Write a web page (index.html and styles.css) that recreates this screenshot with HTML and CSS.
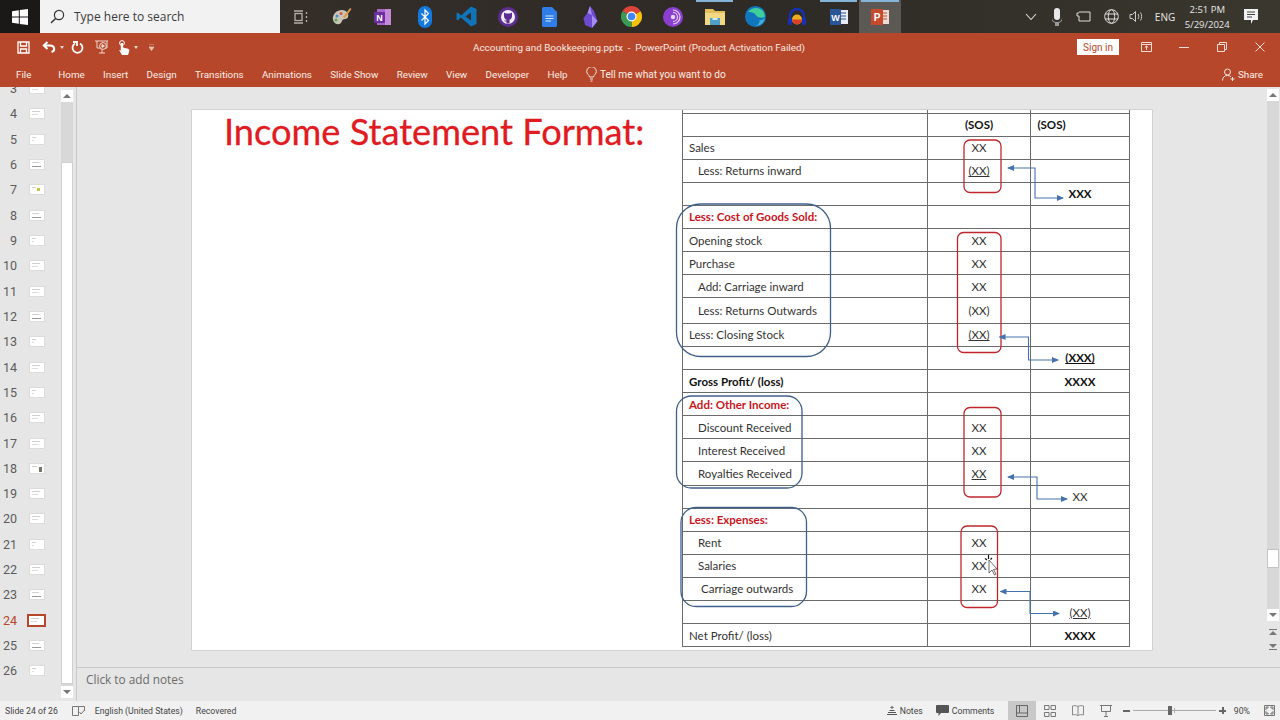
FILE: index.html
```html
<!DOCTYPE html>
<html lang="en">
<head>
    <meta charset="UTF-8">
    <title>Accounting and Bookkeeping.pptx - PowerPoint</title>
    <link rel="stylesheet" href="styles.css">
</head>
<body>
<div class="taskbar">
    <div class="start">
        <svg width="16" height="16" viewBox="0 0 16 16"><path d="M0 2.2L6.8 1.2V7.5H0ZM7.8 1L16 0V7.5H7.8ZM0 8.5H6.8V14.8L0 13.8ZM7.8 8.5H16V16L7.8 15Z" fill="#fff"/></svg>
    </div>
    <div class="search">
        <svg width="15" height="15" viewBox="0 0 15 15" fill="none"><circle cx="9" cy="6" r="4.6" stroke="#333" stroke-width="1.2"/><path d="M5.6 9.4L1 14" stroke="#333" stroke-width="1.4"/></svg>
        <span>Type here to search</span>
    </div>
    <div class="task-icons">
        <div class="task-icon"><svg width="16" height="16" viewBox="0 0 16 16" fill="none" stroke="#b5b0a8" stroke-width="1.3"><path d="M1 2H10M1 14H10"/><rect x="2" y="4.5" width="7" height="7"/><path d="M13.5 3V5M13.5 7V9M13.5 11V13"/></svg></div>
        <div class="task-icon"><svg width="22" height="22" viewBox="0 0 22 22"><path d="M2 14C1 8 6 4 11 4C16 4 18 8 17 11C16 14 12 12 11 15C10 19 4 20 2 14Z" fill="#c9c5b4"/><circle cx="6" cy="10" r="1.5" fill="#3f8fcb"/><circle cx="10" cy="7.5" r="1.5" fill="#d9534f"/><circle cx="5" cy="14" r="1.5" fill="#5aa855"/><path d="M12 11L19 2L20.5 3L14 12Z" fill="#d99a4e"/></svg></div>
        <div class="task-icon"><svg width="20" height="20" viewBox="0 0 20 20"><rect x="4" y="2" width="14" height="16" fill="#a866c8"/><rect x="12" y="2" width="6" height="16" fill="#c58ad8"/><rect x="1" y="5" width="11" height="11" rx="1" fill="#6a2ea0"/><text x="6.5" y="13.6" class="logo-letter" font-size="9">N</text></svg></div>
        <div class="task-icon"><svg width="14" height="22" viewBox="0 0 14 22"><rect x="0" y="0" width="14" height="22" rx="7" fill="#1479dc"/><path d="M3.5 7.5L10.5 14.5L7 18V4L10.5 7.5L3.5 14.5" fill="none" stroke="#fff" stroke-width="1.2"/></svg></div>
        <div class="task-icon"><svg width="21" height="21" viewBox="0 0 21 21"><path d="M15 0.5L20.5 3V18L15 20.5L5 11.5L1.8 14.5L0.5 13.5V7.5L1.8 6.5L5 9.5ZM15 6.5L9.5 10.5L15 14.5Z" fill="#0f74b8"/></svg></div>
        <div class="task-icon"><svg width="20" height="20" viewBox="0 0 20 20"><circle cx="10" cy="10" r="10" fill="#5c2d91"/><circle cx="10" cy="10" r="7" fill="#f3eef8"/><path d="M6 5.5L8 6.5H12L14 5.5V9C14 11.5 12.5 12.5 11.5 12.8V16.5H8.5V14.5C7 14.8 6.3 14 5.5 13C6.3 13.2 7 14 8.5 13.5V12.8C7.5 12.5 6 11.5 6 9Z" fill="#5c2d91"/></svg></div>
        <div class="task-icon"><svg width="15" height="20" viewBox="0 0 15 20"><path d="M1.5 0H10L15 5V18.5C15 19.3 14.3 20 13.5 20H1.5C.7 20 0 19.3 0 18.5V1.5C0 .7.7 0 1.5 0Z" fill="#2f7ee8"/><path d="M3.5 9H11.5M3.5 11.5H11.5M3.5 14H9" stroke="#d5e5fb" stroke-width="1.2"/></svg></div>
        <div class="task-icon"><svg width="15" height="22" viewBox="0 0 15 22"><path d="M7 0L11 5L14.5 15L9 22L2 19L0.5 12L4.5 7Z" fill="#6d4ad0"/><path d="M7 0L9 9L4.5 7ZM9 9L14.5 15L9 22Z" fill="#a88df0"/></svg></div>
        <div class="task-icon"><svg width="21" height="21" viewBox="0 0 21 21"><path d="M10.5 10.5L1.4 5.25A10.5 10.5 0 0 1 19.6 5.25Z" fill="#dc4437"/><path d="M10.5 10.5L19.6 5.25A10.5 10.5 0 0 1 10.5 21Z" fill="#f4c20d"/><path d="M10.5 10.5L10.5 21A10.5 10.5 0 0 1 1.4 5.25Z" fill="#3a9a52"/><circle cx="10.5" cy="10.5" r="5" fill="#fff"/><circle cx="10.5" cy="10.5" r="3.8" fill="#4285f4"/></svg></div>
        <div class="task-icon"><svg width="20" height="20" viewBox="0 0 20 20" fill="none"><circle cx="10" cy="10" r="10" fill="#8b3fd0"/><path d="M10 3A7 7 0 0 1 10 17M10 5.5A4.5 4.5 0 0 1 10 14.5" stroke="#e7d6f7" stroke-width="1.2"/><circle cx="10" cy="10" r="2.2" fill="#e7d6f7"/></svg></div>
        <div class="task-icon"><svg width="20" height="17" viewBox="0 0 20 17"><path d="M0 1H8L10 3H20V17H0Z" fill="#e2bd5a"/><path d="M0 5H20V17H0Z" fill="#f2d784"/><rect x="5" y="10" width="10" height="7" fill="#4f9fc9"/><rect x="7.5" y="10" width="5" height="2" fill="#d4e7f0"/></svg></div>
        <div class="task-icon"><svg width="21" height="21" viewBox="0 0 21 21"><circle cx="10.5" cy="10.5" r="10.5" fill="#1276bc"/><path d="M3 6C6 1.500 13.500 0 18 5C19.500 7 20 9.500 19.500 11C16.500 12.500 12 11.500 11 9C10 7 7 5.500 3 6Z" fill="#3ecf9a"/><path d="M20 12C19 17 15 20 10 20.5C13 19 15 17 14.5 14.5C16 14 18 13.5 20 12Z" fill="#3fb4d8"/></svg></div>
        <div class="task-icon"><svg width="18" height="20" viewBox="0 0 18 20" fill="none"><path d="M2 15V9A7 7 0 0 1 16 9V15" stroke="#1531b5" stroke-width="2.4"/><rect x="0" y="11" width="4" height="7" rx="1.5" fill="#1531b5"/><rect x="14" y="11" width="4" height="7" rx="1.5" fill="#1531b5"/><circle cx="9" cy="12.5" r="5" fill="#e8b020"/><path d="M4 12.5H14A5 5 0 0 1 4.5 14.5Z" fill="#d8402c"/></svg></div>
        <div class="task-icon"><svg width="18" height="16" viewBox="0 0 18 16"><rect x="7" y="1" width="11" height="14" fill="#e8edf5"/><path d="M11 4H16M11 7H16M11 10H16" stroke="#2a5596" stroke-width="1.1"/><rect x="0" y="0" width="11" height="16" fill="#2a5596"/><text x="5.5" y="11.5" class="logo-letter" font-size="9">W</text></svg></div>
        <div class="task-icon active"><svg width="18" height="16" viewBox="0 0 18 16"><rect x="8" y="1" width="10" height="14" fill="#ecdcd6"/><path d="M12 4H16M12 7H16M12 10H16" stroke="#c64b2e" stroke-width="1.1"/><rect x="0" y="0" width="12" height="16" fill="#c64b2e"/><text x="6" y="11.8" class="logo-letter" font-size="10">P</text></svg></div>
    </div>
    <div class="tray">
        <svg class="tray-chevron" width="12" height="8" viewBox="0 0 12 8" fill="none"><path d="M1 1L6 6.5L11 1" stroke="#ddd" stroke-width="1.1"/></svg>
        <svg class="tray-mic" width="10" height="18" viewBox="0 0 10 18"><rect x="2" y="0" width="6" height="12" rx="3" fill="#e8e8e8"/><path d="M0 9C0 13 2 14 5 14C8 14 10 13 10 9V13L7 15V18H3V15L0 13Z" fill="#999"/></svg>
        <svg class="tray-net" width="15" height="11" viewBox="0 0 15 11" fill="none" stroke="#ddd"><path d="M3 1H14V10H3V5H1V2H3"/></svg>
        <svg class="tray-globe" width="15" height="15" viewBox="0 0 15 15" fill="none" stroke="#ddd"><circle cx="7.5" cy="7.5" r="6.8"/><ellipse cx="7.5" cy="7.5" rx="3.2" ry="6.8"/><path d="M1 5H14M1 10H14"/></svg>
        <svg class="tray-sound" width="15" height="13" viewBox="0 0 15 13" fill="none" stroke="#ccc"><path d="M1 4.5H3.5L6.5 1.5V11.5L3.5 8.5H1Z"/><path d="M9 4C10 5.5 10 7.5 9 9M11.5 2.5C13 5 13 8 11.5 10.5"/></svg>
        <span class="tray-lang">ENG</span>
        <div class="clock"><span>2:51 PM</span><span>5/29/2024</span></div>
        <svg class="tray-notify" width="14" height="15" viewBox="0 0 14 15"><path d="M0 0H14V11H9L7 15V11H0Z" fill="#f2f2f2"/><path d="M3 3H11M3 5.5H11M3 8H8" stroke="#444"/></svg>
    </div>
</div>

<div class="titlebar">
    <div class="qat">
        <svg class="qat-save" width="13" height="13" viewBox="0 0 13 13" fill="none" stroke="#fff" stroke-width="1.3"><path d="M1 1H12V12H1Z"/><path d="M3.5 1V5H9.5V1M3.5 12V8H9.5V12"/></svg>
        <svg class="qat-undo" width="14" height="12" viewBox="0 0 14 12" fill="none" stroke="#fff" stroke-width="2"><path d="M5.5 1L1.8 4.5L5.5 8M2 4.5H8C13 4.5 13.5 10 9.5 11"/></svg>
        <i class="drop"></i>
        <svg class="qat-redo" width="13" height="13" viewBox="0 0 13 13" fill="none" stroke="#fff" stroke-width="1.8"><path d="M4 2.5A5 5 0 1 0 9 2.5"/><path d="M2 1H6V5"/></svg>
        <svg class="qat-show" width="14" height="14" viewBox="0 0 14 14" fill="none" stroke="#f0d8cf"><path d="M0 1H13M2 1V8H12V1M7 8V13M4 13H10"/><circle cx="8" cy="6" r="3.4" fill="#b7472a"/><path d="M7 4.5L9.5 6L7 7.5Z" fill="#fff"/></svg>
        <svg class="qat-touch" width="13" height="15" viewBox="0 0 13 15"><circle cx="5" cy="3" r="2.4" fill="none" stroke="#fff"/><path d="M3.8 3H6V7.5L11 8.8C12.5 9.2 12.5 10.5 12 12L11 15H5L2 10L3.8 10.5Z" fill="#fff"/></svg>
        <i class="drop"></i>
        <svg class="qat-more" width="5" height="7" viewBox="0 0 5 7"><path d="M0 0H5M0 3H5L2.5 6.5Z" stroke="#e8c0b0" fill="#e8c0b0" stroke-width=".8"/></svg>
    </div>
    <div class="doc-title">Accounting and Bookkeeping.pptx  -  PowerPoint (Product Activation Failed)</div>
    <div class="window-controls">
        <button class="signin">Sign in</button>
        <svg class="win-display" width="11" height="10" viewBox="0 0 11 10" fill="none" stroke="#f2dcd4"><path d="M.5.5H10.5V9.5H.5ZM.5 2.5H10.5M5.5 8V4M3.8 5.5L5.5 4L7.2 5.5"/></svg>
        <svg class="win-min" width="10" height="10" viewBox="0 0 10 10"><path d="M0 5.5H10" stroke="#f2dcd4"/></svg>
        <svg class="win-restore" width="10" height="10" viewBox="0 0 10 10" fill="none" stroke="#f2dcd4"><path d="M.5 2.5H7.5V9.5H.5ZM2.5 2.5V.5H9.5V7.5H7.5"/></svg>
        <svg class="win-close" width="10" height="10" viewBox="0 0 10 10"><path d="M.5.5L9.5 9.5M9.5.5L.5 9.5" stroke="#f2dcd4"/></svg>
    </div>
</div>

<div class="ribbon">
    <span class="tab tab-file">File</span>
    <span class="tab">Home</span>
    <span class="tab">Insert</span>
    <span class="tab">Design</span>
    <span class="tab">Transitions</span>
    <span class="tab">Animations</span>
    <span class="tab">Slide Show</span>
    <span class="tab">Review</span>
    <span class="tab">View</span>
    <span class="tab">Developer</span>
    <span class="tab">Help</span>
    <span class="tell-me">
        <svg width="11" height="15" viewBox="0 0 11 15" fill="none" stroke="#f5e5de"><path d="M3.5 10C3 7.5.7 7 .7 4.5A4.8 4.8 0 0 1 10.3 4.5C10.3 7 8 7.5 7.5 10ZM4 12H7M4.5 14H6.5"/></svg>
        Tell me what you want to do
    </span>
    <span class="share">
        <svg width="13" height="13" viewBox="0 0 13 13" fill="none" stroke="#f5e5de"><circle cx="5.5" cy="4" r="3"/><path d="M.5 12.5C.5 9 3 7.5 5.5 7.5C7 7.5 8 8 9 8.8M10.5 9V13M8.5 11H12.5"/></svg>
        Share
    </span>
</div>

<div class="workspace">
    <div class="thumbs">
        <div class="thumb-list">
            <div class="thumb-row"><span>3</span><i class="thumb"></i></div>
            <div class="thumb-row"><span>4</span><i class="thumb"></i></div>
            <div class="thumb-row"><span>5</span><i class="thumb sparse"></i></div>
            <div class="thumb-row"><span>6</span><i class="thumb dark"></i></div>
            <div class="thumb-row"><span>7</span><i class="thumb lime"></i></div>
            <div class="thumb-row"><span>8</span><i class="thumb dark"></i></div>
            <div class="thumb-row"><span>9</span><i class="thumb sparse"></i></div>
            <div class="thumb-row"><span>10</span><i class="thumb"></i></div>
            <div class="thumb-row"><span>11</span><i class="thumb"></i></div>
            <div class="thumb-row"><span>12</span><i class="thumb dark"></i></div>
            <div class="thumb-row"><span>13</span><i class="thumb sparse"></i></div>
            <div class="thumb-row"><span>14</span><i class="thumb"></i></div>
            <div class="thumb-row"><span>15</span><i class="thumb sparse"></i></div>
            <div class="thumb-row"><span>16</span><i class="thumb"></i></div>
            <div class="thumb-row"><span>17</span><i class="thumb"></i></div>
            <div class="thumb-row"><span>18</span><i class="thumb figure"></i></div>
            <div class="thumb-row"><span>19</span><i class="thumb"></i></div>
            <div class="thumb-row"><span>20</span><i class="thumb"></i></div>
            <div class="thumb-row"><span>21</span><i class="thumb sparse"></i></div>
            <div class="thumb-row"><span>22</span><i class="thumb"></i></div>
            <div class="thumb-row"><span>23</span><i class="thumb dark"></i></div>
            <div class="thumb-row current"><span>24</span><i class="thumb"></i></div>
            <div class="thumb-row"><span>25</span><i class="thumb dark"></i></div>
            <div class="thumb-row"><span>26</span><i class="thumb sparse"></i></div>
        </div>
    </div>
    <div class="thumb-scroll">
        <div class="scroll-btn"><i class="tri-up"></i></div>
        <div class="thumb-track"></div>
        <div class="thumb-handle"></div>
        <div class="scroll-btn"><i class="tri-down"></i></div>
    </div>

    <div class="editor">
        <div class="canvas">
            <div class="slide-area">
                <div class="slide">
                    <h1 class="slide-title">Income Statement Format:</h1>
                    <table class="statement">
                        <colgroup><col class="col-label"><col class="col-inner"><col class="col-outer"></colgroup>
                        <tr class="stub"><td></td><td></td><td></td></tr>
                        <tr><td></td><td class="num b">(SOS)</td><td class="num b sos-left">(SOS)</td></tr>
                        <tr><td>Sales</td><td class="num">XX</td><td></td></tr>
                        <tr><td class="ind">Less: Returns inward</td><td class="num u">(XX)</td><td></td></tr>
                        <tr><td></td><td></td><td class="num b">XXX</td></tr>
                        <tr><td class="head">Less: Cost of Goods Sold:</td><td></td><td></td></tr>
                        <tr><td>Opening stock</td><td class="num">XX</td><td></td></tr>
                        <tr><td>Purchase</td><td class="num">XX</td><td></td></tr>
                        <tr><td class="ind">Add: Carriage inward</td><td class="num">XX</td><td></td></tr>
                        <tr class="tall"><td class="ind">Less: Returns Outwards</td><td class="num">(XX)</td><td></td></tr>
                        <tr><td>Less: Closing Stock</td><td class="num u">(XX)</td><td></td></tr>
                        <tr><td></td><td></td><td class="num b u">(XXX)</td></tr>
                        <tr><td class="b">Gross Profit/ (loss)</td><td></td><td class="num b">XXXX</td></tr>
                        <tr><td class="head">Add: Other Income:</td><td></td><td></td></tr>
                        <tr><td class="ind">Discount Received</td><td class="num">XX</td><td></td></tr>
                        <tr><td class="ind">Interest Received</td><td class="num">XX</td><td></td></tr>
                        <tr><td class="ind">Royalties Received</td><td class="num u">XX</td><td></td></tr>
                        <tr><td></td><td></td><td class="num">XX</td></tr>
                        <tr><td class="head">Less: Expenses:</td><td></td><td></td></tr>
                        <tr><td class="ind">Rent</td><td class="num">XX</td><td></td></tr>
                        <tr><td class="ind">Salaries</td><td class="num">XX</td><td></td></tr>
                        <tr><td class="ind-more">Carriage outwards</td><td class="num">XX</td><td></td></tr>
                        <tr><td></td><td></td><td class="num u">(XX)</td></tr>
                        <tr><td>Net Profit/ (loss)</td><td></td><td class="num b">XXXX</td></tr>
                    </table>
                    <svg class="annotations" width="960" height="540" viewBox="0 0 960 540" fill="none">
                        <defs>
                            <marker id="head" markerWidth="7" markerHeight="6" refX="6" refY="3" orient="auto-start-reverse" markerUnits="userSpaceOnUse"><path d="M0 0L7 3L0 6Z" fill="#4472ad"/></marker>
                        </defs>
                        <g stroke="#3f5f8a" stroke-width="1.3">
                            <rect x="484.5" y="94" width="154" height="152.5" rx="24"/>
                            <rect x="484.5" y="286" width="125.5" height="92" rx="15"/>
                            <rect x="489" y="397.5" width="125.5" height="99" rx="15"/>
                        </g>
                        <g stroke="#c0272d" stroke-width="1.3">
                            <rect x="772" y="30" width="37" height="52.5" rx="6"/>
                            <rect x="765.5" y="122.5" width="43.5" height="120" rx="6"/>
                            <rect x="772" y="297.5" width="37" height="89.5" rx="6"/>
                            <rect x="769" y="416" width="36.5" height="81.5" rx="6"/>
                        </g>
                        <g stroke="#4472ad" stroke-width="1.1" marker-start="url(#head)" marker-end="url(#head)">
                            <path d="M816 58H843V88H871"/>
                            <path d="M807.5 227H836.5V250H866"/>
                            <path d="M816 367H845V389H875"/>
                            <path d="M808.5 481.500H838V503.500H867"/>
                        </g>
                        <g class="cursor">
                            <path d="M797 450L797 463L800 460L802.500 465L804 464L801.500 459.500L805 459Z" fill="#fff" stroke="#333" stroke-width=".7"/>
                            <path d="M796.500 445V449M793 448.500L795 450M800 448L798.500 449.500" stroke="#111" stroke-width="1.200"/>
                        </g>
                    </svg>
                </div>
            </div>
            <div class="main-scroll">
                <div class="scroll-btn"><i class="tri-up"></i></div>
                <div class="main-track"><div class="main-handle"></div></div>
                <div class="scroll-btn"><i class="tri-down"></i></div>
                <div class="page-btn"><i class="bar"></i><i class="tri-up"></i></div>
                <div class="page-btn"><i class="tri-down"></i><i class="bar"></i></div>
            </div>
        </div>
        <div class="notes">Click to add notes</div>
    </div>
</div>

<div class="statusbar">
    <span class="status-slide">Slide 24 of 26</span>
    <svg class="status-check" width="13" height="11" viewBox="0 0 13 11" fill="none" stroke="#777"><path d="M6.500 1.500H.5V10.500H6.500V1.500H12.500V6M7.500 7L9 9L12.500 5"/></svg>
    <span class="status-lang">English (United States)</span>
    <span class="status-recovered">Recovered</span>
    <div class="status-right">
        <span class="status-item status-notes">
            <svg width="10" height="9" viewBox="0 0 10 9" stroke="#555" fill="none"><path d="M0 8.500H10M1 6.500H9M2.500 4.500H7.500M5 .5V3M3.500 2L5 .5L6.500 2"/></svg>
            Notes
        </span>
        <span class="status-item status-comments">
            <svg width="13" height="11" viewBox="0 0 13 11"><path d="M1 0H12C12.500 0 13 .5 13 1V7C13 7.500 12.500 8 12 8H5L2.500 11V8H1C.5 8 0 7.500 0 7V1C0 .5.5 0 1 0Z" fill="#555"/></svg>
            Comments
        </span>
        <div class="view-btn selected"><svg width="12" height="12" viewBox="0 0 12 12" fill="none" stroke="#666"><path d="M.5.5H11.500V11.500H.5ZM3.500.5V8H11.500M.5 8H3.500"/></svg></div>
        <div class="view-btn"><svg width="12" height="12" viewBox="0 0 12 12" fill="none" stroke="#777"><path d="M.5.5H5V4.500H.5ZM7 .5H11.500V4.500H7ZM.5 7.500H5V11.500H.5ZM7 7.500H11.500V11.500H7Z"/></svg></div>
        <div class="view-btn"><svg width="12" height="11" viewBox="0 0 12 11" fill="none" stroke="#888"><path d="M6 1.500C4.500.5 2 .5.5 1V10C2 9.500 4.500 9.500 6 10.500C7.500 9.500 10 9.500 11.500 10V1C10 .5 7.500.5 6 1.500ZM6 1.500V10.500"/></svg></div>
        <div class="view-btn"><svg width="12" height="12" viewBox="0 0 12 12" fill="none" stroke="#777"><path d="M0 .5H12M1.500.5V6.500H10.500V.5M6 6.500V11M4 11.500H8"/></svg></div>
        <span class="zoom-minus"></span>
        <div class="zoom-slider"><i class="zoom-tick"></i><i class="zoom-thumb"></i></div>
        <span class="zoom-plus"></span>
        <span class="zoom-value">90%</span>
        <svg class="zoom-fit" width="11" height="11" viewBox="0 0 11 11" fill="none" stroke="#777"><path d="M.5.5H10.500V10.500H.5ZM2 2H4.500L2 4.500ZM9 2H6.500L9 4.500ZM2 9H4.500L2 6.500ZM9 9H6.500L9 6.500Z"/></svg>
    </div>
</div>
</body>
</html>
```

FILE: styles.css
```css
:root {
    --accent: #b7472a;
    --work-bg: #e6e6e6;
    --ui-font: Roboto, "Open Sans", sans-serif;
}

* {
    box-sizing: border-box;
    margin: 0;
    padding: 0;
}

body {
    width: 1280px;
    height: 720px;
    overflow: hidden;
    display: flex;
    flex-direction: column;
    font-family: var(--ui-font);
    background-color: var(--work-bg);
}

/* Windows taskbar */
.taskbar {
    height: 33px;
    display: flex;
    align-items: stretch;
    background: linear-gradient(90deg, #38302b, #2e2a26 60%, #3a372e);
    color: #e8e8e8;
    font-family: "Open Sans", sans-serif;
    flex: none;
}

.start {
    width: 40px;
    background-color: #1b1918;
    display: flex;
    align-items: center;
    justify-content: center;
}

.search {
    width: 240px;
    background-color: #f2f2f2;
    color: #3a3a3a;
    display: flex;
    align-items: center;
    gap: 9px;
    padding-left: 10px;
    font-size: 12px;
}

.task-icons {
    display: flex;
}

.task-icon {
    width: 41.4px;
    display: flex;
    align-items: center;
    justify-content: center;
    position: relative;
}

.task-icon.active {
    background-color: #5c5853;
}

.task-icon:nth-child(11)::before,
.task-icon:nth-child(14)::before,
.task-icon:nth-child(15)::before {
    content: "";
    position: absolute;
    left: 2px;
    right: 2px;
    top: 0;
    height: 2px;
    background-color: #86b4d8;
}

.logo-letter {
    fill: #fff;
    font-family: "Liberation Sans", sans-serif;
    font-weight: 700;
    text-anchor: middle;
}

.tray {
    flex: 1;
    position: relative;
    display: flex;
    align-items: center;
}

.tray-chevron { margin-left: 124px; }
.tray-mic { margin-left: 15px; }
.tray-net { margin-left: 14px; }
.tray-globe { margin-left: 13px; }
.tray-sound { margin-left: 10px; }

.tray-lang {
    margin-left: 11px;
    font-size: 10px;
}

.clock {
    width: 64px;
    display: flex;
    flex-direction: column;
    align-items: center;
    font-size: 9.5px;
    line-height: 15px;
}

.tray-notify { margin-left: 5px; }

/* Title bar */
.titlebar {
    height: 28px;
    flex: none;
    position: relative;
    display: flex;
    align-items: center;
    background-color: var(--accent);
    color: #f7e9e3;
}

.qat {
    display: flex;
    align-items: center;
    padding-left: 17px;
}

.qat-undo { margin-left: 12px; }
.qat-redo { margin-left: 6.5px; }
.qat-show { margin-left: 11.5px; }
.qat-touch { margin-left: 7.5px; }
.qat-more { margin-left: 11px; }

.drop {
    width: 0;
    height: 0;
    margin-left: 4px;
    border-left: 2.5px solid transparent;
    border-right: 2.5px solid transparent;
    border-top: 3px solid #f0d8cf;
}

.doc-title {
    position: absolute;
    left: 0;
    right: 2px;
    text-align: center;
    font-size: 9.9px;
    white-space: pre;
}

.window-controls {
    margin-left: auto;
    display: flex;
    align-items: center;
    position: relative;
}

.signin {
    width: 42px;
    height: 16px;
    border: none;
    background-color: #fff;
    color: #b7472a;
    font-family: var(--ui-font);
    font-size: 10px;
}

.win-display { margin-left: 22px; }
.win-min { margin-left: 27px; }
.win-restore { margin-left: 28px; }
.win-close { margin: 0 15px 0 28px; }

/* Ribbon tabs */
.ribbon {
    height: 26px;
    flex: none;
    display: flex;
    align-items: center;
    gap: 18.3px;
    padding: 0 17px 0 16px;
    background-color: var(--accent);
    color: #f9eee9;
    font-size: 9.85px;
}

.tab-file { margin-right: 8.5px; }

.tell-me {
    display: flex;
    align-items: center;
    gap: 3px;
    font-size: 10.15px;
}

.share {
    margin-left: auto;
    display: flex;
    align-items: center;
    gap: 3px;
}

/* Slide thumbnails */
.workspace {
    flex: 1;
    display: flex;
    min-height: 0;
}

.thumbs {
    width: 61px;
    overflow: hidden;
    flex: none;
}

.thumb-list {
    margin-top: -11px;
}

.thumb-row {
    height: 25.32px;
    display: flex;
    align-items: center;
    color: #5c5c5c;
    font-size: 12.5px;
}

.thumb-row span {
    width: 17px;
    text-align: right;
}

.thumb {
    width: 16px;
    height: 11px;
    margin-left: 12px;
    background-color: #fff;
    border: 1px solid #dcdcdc;
    background-image: linear-gradient(#d0d0d0, #d0d0d0), linear-gradient(#dcdcdc, #dcdcdc);
    background-size: 8px 1px, 6px 1px;
    background-position: 2px 2px, 2px 5px;
    background-repeat: no-repeat;
}

.thumb.sparse {
    background-size: 4px 1px, 2px 1px;
}

.thumb.dark {
    background-image: linear-gradient(#d0d0d0, #d0d0d0), linear-gradient(#999, #999);
    background-size: 7px 1px, 9px 1px;
    background-position: 2px 2px, 2px 6px;
}

.thumb.lime {
    background-image: linear-gradient(#d0d0d0, #d0d0d0), linear-gradient(#c4c44a, #c4c44a);
    background-size: 4px 1px, 3px 3px;
    background-position: 2px 2px, 7px 3px;
}

.thumb.figure {
    background-image: linear-gradient(#d0d0d0, #d0d0d0), linear-gradient(#776, #776);
    background-size: 5px 1px, 3px 5px;
    background-position: 2px 2px, 9px 3px;
}

.thumb-row.current {
    color: #b7472a;
}

.thumb-row.current .thumb {
    width: 19px;
    height: 13px;
    margin-left: 10px;
    border: 2px solid #b7472a;
}

.thumb-scroll {
    width: 12px;
    margin-top: 3px;
    margin-bottom: 3px;
    flex: none;
    display: flex;
    flex-direction: column;
    background-color: #d8d8d8;
}

.thumb-track {
    height: 60px;
}

.thumb-handle {
    flex: 1;
    background-color: #fff;
    margin-bottom: 2px;
    border: 1px solid #d0d0d0;
}

.scroll-btn {
    height: 12px;
    flex: none;
    background-color: #fff;
    display: flex;
    align-items: center;
    justify-content: center;
}

.tri-up,
.tri-down {
    width: 0;
    height: 0;
    border-left: 4px solid transparent;
    border-right: 4px solid transparent;
}

.tri-up { border-bottom: 4px solid #777; }
.tri-down { border-top: 4px solid #777; }

/* Editing area */
.editor {
    flex: 1;
    display: flex;
    flex-direction: column;
    margin-left: 3px;
    border-left: 1px solid #c8c8c8;
    min-width: 0;
}

.canvas {
    height: 580px;
    display: flex;
    flex: none;
}

.slide-area {
    flex: 1;
    display: flex;
    justify-content: center;
    padding-top: 23px;
}

.slide {
    width: 960px;
    height: 540px;
    position: relative;
    overflow: hidden;
    background-color: #fff;
    box-shadow: 0 0 0 1px #d2d2d2;
    flex: none;
}

.slide-title {
    position: absolute;
    left: 32px;
    top: -1px;
    font-family: Lato, "Open Sans", sans-serif;
    font-size: 36.2px;
    font-weight: 400;
    line-height: 44px;
    color: #e01b22;
    -webkit-text-stroke: 0.3px #e01b22;
    white-space: nowrap;
}

.statement {
    position: absolute;
    left: 490px;
    top: 0;
    width: 447px;
    table-layout: fixed;
    border-collapse: collapse;
    font-family: Lato, "Open Sans", sans-serif;
    font-size: 11.5px;
    line-height: 14px;
    color: #333;
}

.col-label { width: 245px; }
.col-inner { width: 103px; }
.col-outer { width: 99px; }

.statement td {
    height: 23.1px;
    padding: 1px 0 0 6px;
    border: 1px solid #6b6b6b;
    white-space: nowrap;
    overflow: hidden;
}

.statement .stub td {
    height: 3px;
    padding: 0;
    border-top: none;
    line-height: 0;
    font-size: 0;
}

.statement .tall td {
    height: 25.6px;
}

.statement .num {
    padding: 1px 0 0;
    text-align: center;
}

.statement .sos-left {
    padding-right: 57px;
}

.statement .ind { padding-left: 15px; }
.statement .ind-more { padding-left: 18px; }

.statement .b {
    font-weight: 700;
    color: #111;
}

.statement .u { text-decoration: underline; }

.statement .head {
    font-weight: 700;
    color: #c8161d;
}

.annotations {
    position: absolute;
    left: 0;
    top: 0;
}

/* Main scrollbar */
.main-scroll {
    width: 12px;
    margin: 2px 1px 0 0;
    flex: none;
    display: flex;
    flex-direction: column;
}

.main-track {
    height: 508px;
    flex: none;
    background-color: #d8d8d8;
    position: relative;
}

.main-handle {
    position: absolute;
    left: 0;
    right: 0;
    top: 448px;
    height: 19px;
    background-color: #fff;
    border: 1px solid #c4c4c4;
}

.page-btn {
    height: 14px;
    margin-top: 1px;
    display: flex;
    flex-direction: column;
    align-items: center;
    justify-content: center;
    gap: 1px;
}

.scroll-btn + .page-btn {
    margin-top: 4px;
}

.page-btn .bar {
    width: 8px;
    height: 1px;
    background-color: #777;
}

/* Notes pane */
.notes {
    flex: 1;
    border-top: 1px solid #c9c9c9;
    padding: 0 0 0 9px;
    font-family: "Open Sans", sans-serif;
    font-size: 11.8px;
    line-height: 22px;
    color: #6a6a6a;
}

/* Status bar */
.statusbar {
    height: 19px;
    flex: none;
    display: flex;
    align-items: center;
    background-color: #f1f1f1;
    color: #444;
    font-size: 8.7px;
    padding-left: 5px;
}

.status-check { margin-left: 14px; }
.status-lang { margin-left: 10px; }
.status-recovered { margin-left: 13px; }

.status-right {
    margin-left: auto;
    display: flex;
    align-items: center;
    height: 100%;
}

.status-item {
    display: flex;
    align-items: center;
    gap: 3px;
}

.status-comments { margin-left: 13px; }

.view-btn {
    width: 28px;
    height: 100%;
    display: flex;
    align-items: center;
    justify-content: center;
}

.view-btn.selected {
    margin-left: 14px;
    background-color: #c8c8c8;
}

.zoom-minus,
.zoom-plus {
    width: 7px;
    height: 2px;
    background-color: #666;
    position: relative;
}

.zoom-minus { margin-left: 3px; }

.zoom-plus { margin-left: 3px; }

.zoom-plus::after {
    content: "";
    position: absolute;
    left: 2.5px;
    top: -2.5px;
    width: 2px;
    height: 7px;
    background-color: #666;
}

.zoom-slider {
    width: 83px;
    height: 1px;
    margin-left: 3px;
    background-color: #aaa;
    position: relative;
}

.zoom-thumb {
    position: absolute;
    left: 35px;
    top: -4px;
    width: 4px;
    height: 9px;
    background-color: #666;
}

.zoom-tick {
    position: absolute;
    left: 41px;
    top: -2px;
    width: 1px;
    height: 5px;
    background-color: #aaa;
}

.zoom-value { margin-left: 7.5px; }

.zoom-fit { margin: 0 5px 0 14px; }
```
